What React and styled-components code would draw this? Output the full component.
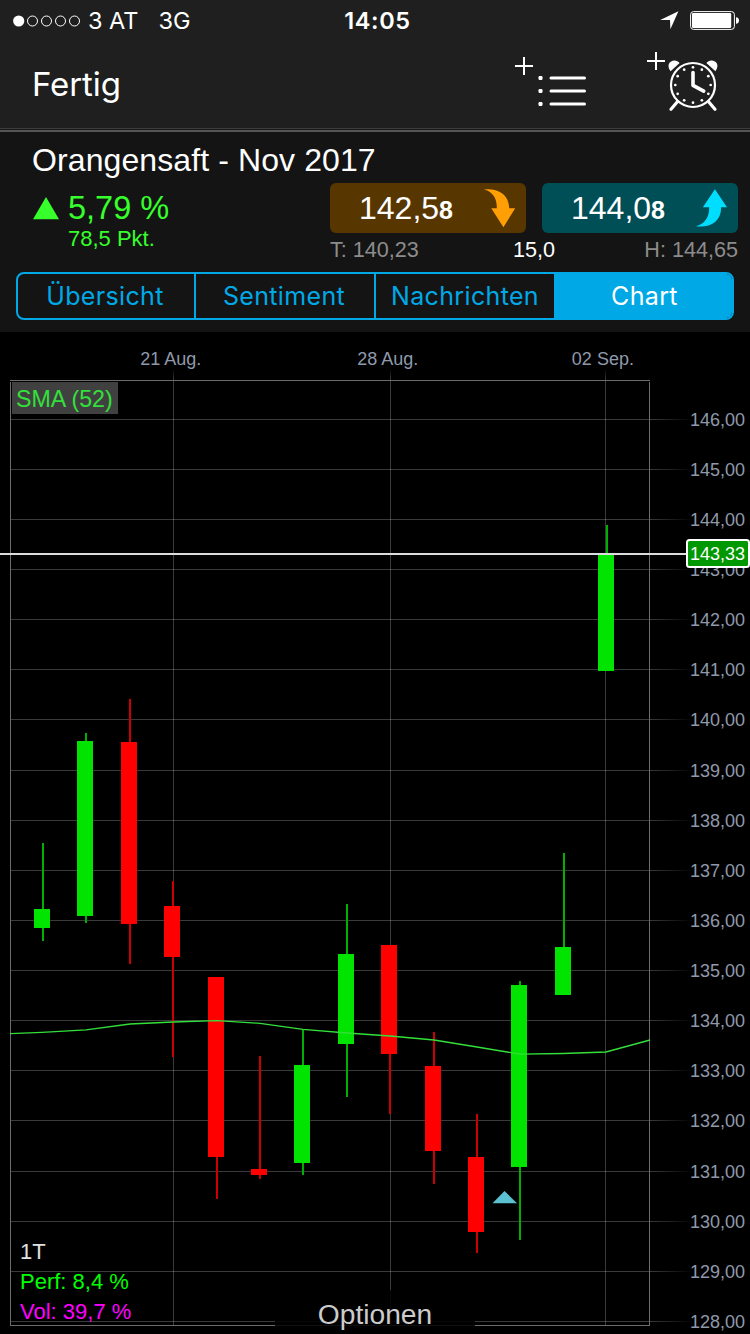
import React from 'react';
import styled, { createGlobalStyle } from 'styled-components';

const tabs = [
    { id: 'overview', label: 'Übersicht' },
    { id: 'sentiment', label: 'Sentiment' },
    { id: 'news', label: 'Nachrichten' },
    { id: 'chart', label: 'Chart' },
];

// vertical positions are in chart pixels, the chart starts right below the quote panel
const TOP = 332;

const priceLines = [
    [146, 419], [145, 469], [144, 519], [143, 569], [142, 619], [141, 669], [140, 719],
    [139, 770], [138, 820], [137, 870], [136, 920], [135, 970], [134, 1020], [133, 1070],
    [132, 1120], [131, 1171], [130, 1221], [129, 1271], [128, 1321],
];

const dateLines = [
    { label: '21 Aug.', x: 173, center: 170.7 },
    { label: '28 Aug.', x: 390, center: 387.7 },
    { label: '02 Sep.', x: 605, center: 602.9 },
];

const candles = [
    { x: 34, open: 909, close: 928, high: 843, low: 941, up: true },
    { x: 77, open: 741, close: 916, high: 733, low: 923, up: true },
    { x: 121, open: 742, close: 924, high: 699, low: 964 },
    { x: 164, open: 906, close: 957, high: 881, low: 1057 },
    { x: 208, open: 977, close: 1157, high: 977, low: 1199 },
    { x: 251, open: 1169, close: 1175, high: 1056, low: 1179 },
    { x: 294, open: 1065, close: 1163, high: 1030, low: 1175, up: true },
    { x: 338, open: 954, close: 1044, high: 904, low: 1097, up: true },
    { x: 381, open: 945, close: 1054, high: 945, low: 1114 },
    { x: 425, open: 1066, close: 1151, high: 1032, low: 1184 },
    { x: 468, open: 1157, close: 1232, high: 1114, low: 1253 },
    { x: 511, open: 985, close: 1167, high: 981, low: 1240, up: true },
    { x: 555, open: 947, close: 995, high: 853, low: 995, up: true },
    { x: 598, open: 554, close: 671, high: 525, low: 671, up: true },
];

const sma = '10,1033.7 42,1032.3 86,1029.8 130,1024 173,1022 217,1020.7 260,1023.3 303,1029.4 347,1033 390,1036 434,1040 477,1047 520,1054.2 563,1053.5 606,1052 650,1040';

const SignalDots = () => (
    <svg width="68" height="12" viewBox="0 0 68 12">
        <circle cx="5.7" cy="6" r="5.6" fill="#fff" />
        {[19.5, 33.5, 47.5, 61.5].map((cx) => (
            <circle key={cx} cx={cx} cy="6" r="5" fill="none" stroke="#fff" strokeWidth="1" />
        ))}
    </svg>
);

const LocationIcon = () => (
    <svg width="19" height="19" viewBox="0 0 19 19">
        <path d="M18.4 .2L10.4 18.2L10 9H.2Z" fill="#fff" />
    </svg>
);

const BatteryIcon = () => (
    <svg width="49" height="20" viewBox="0 0 49 20">
        <rect x=".6" y=".6" width="43.8" height="17.8" rx="3" fill="none" stroke="#fff" strokeWidth="1" />
        <rect x="2" y="2" width="39.2" height="15" rx="1.2" fill="#fff" />
        <path d="M46 6.2C48 6.2 49 7.6 49 9.5S48 12.8 46 12.8Z" fill="#fff" />
    </svg>
);

const AddListIcon = () => (
    <svg width="72" height="52" viewBox="0 0 72 52">
        <path d="M0 9H18M9 0V18" stroke="#fff" strokeWidth="2" />
        {[21, 34, 47].map((y) => (
            <g key={y}>
                <rect x="23.5" y={y - 2} width="4" height="4" rx="1.2" fill="#fff" />
                <path d={`M36 ${y}H69.5`} stroke="#fff" strokeWidth="3" strokeLinecap="round" />
            </g>
        ))}
    </svg>
);

const AddAlarmIcon = () => (
    <svg width="72" height="60" viewBox="0 0 72 60">
        <path d="M0 9H18M9 0V18" stroke="#fff" strokeWidth="2" />
        <path d="M23.6 19.3C20.8 15.4 21 11.8 23.7 9.8C26.6 7.6 30.5 8.1 32.6 11Z" fill="#fff" />
        <path d="M68.4 19.3C71.2 15.4 71 11.8 68.3 9.8C65.4 7.6 61.5 8.1 59.4 11Z" fill="#fff" />
        <circle cx="46" cy="33" r="22" fill="none" stroke="#fff" strokeWidth="2.2" />
        <path d="M30.2 50L24 57.2M61.8 50L68 57.2" stroke="#fff" strokeWidth="3.2" strokeLinecap="round" />
        <path d="M46 20.5V33.3L56.7 39.2" fill="none" stroke="#fff" strokeWidth="3.6" strokeLinecap="round" strokeLinejoin="round" />
        {Array.from({ length: 12 }, (_, i) => (
            <circle
                key={i}
                cx={46 + 17.7 * Math.sin((i * Math.PI) / 6)}
                cy={33 - 17.7 * Math.cos((i * Math.PI) / 6)}
                r="1.35"
                fill="#fff"
            />
        ))}
    </svg>
);

const SellArrow = () => (
    <svg width="32" height="39" viewBox="0 0 32 39">
        <path d="M0 .3C14-.6 25 5 25.2 19.3H31.2L19.4 38.2L7.3 19.3H12.8C13 10 9.5 3.2 0 .3Z" fill="#ff9f05" />
    </svg>
);

const BuyArrow = () => (
    <svg width="32" height="39" viewBox="0 0 32 39">
        <path d="M0 37.3C14 38.8 25 33 25.2 18.2H31L18.9 .2L6.9 18.2H13.2C13.4 27 9.7 34.6 0 37.3Z" fill="#00deff" />
    </svg>
);

const CandleChart = () => (
    <ChartSvg width="750" height="1002" viewBox={`0 ${TOP} 750 1002`}>
        <defs>
            <linearGradient id="tailRight" x1="650" x2="694" y1="0" y2="0" gradientUnits="userSpaceOnUse">
                <stop offset="0" stopColor="#3a3a3a" />
                <stop offset="1" stopColor="#3a3a3a" stopOpacity="0" />
            </linearGradient>
            <linearGradient id="tailTop" x1="0" x2="0" y1="380" y2="368" gradientUnits="userSpaceOnUse">
                <stop offset="0" stopColor="#3a3a3a" />
                <stop offset="1" stopColor="#3a3a3a" stopOpacity="0" />
            </linearGradient>
        </defs>
        <g shapeRendering="crispEdges">
            {priceLines.map(([price, y]) => (
                <g key={price}>
                    <rect x="10" y={y} width="640" height="1" fill="#3a3a3a" />
                    <rect x="650" y={y} width="44" height="1" fill="url(#tailRight)" />
                </g>
            ))}
            {dateLines.map(({ label, x }) => (
                <g key={label}>
                    <rect x={x} y="368" width="1" height="12" fill="url(#tailTop)" />
                    <rect x={x} y="380" width="1" height="945" fill="#fff" fillOpacity=".23" />
                </g>
            ))}
            <path d="M10 380.5H650M10.5 382V1326M649.5 382V1326M10 1325.5H650" stroke="#6c6c6c" />
            {candles.map(({ x, open, close, high, low, up }) => (
                <g key={x}>
                    <rect x={x + 8} y={high} width="2" height={low - high} fill={up ? '#00b000' : '#cc0000'} />
                    <rect x={x} y={open} width="16" height={close - open} fill={up ? '#00e400' : '#ff0000'} />
                </g>
            ))}
        </g>
        <polyline points={sma} fill="none" stroke="#33e03a" strokeWidth="1.3" />
        <path d="M504.5 1191L517 1203.2H492.5Z" fill="#5bc0d0" />
        <AxisLabels>
            {dateLines.map(({ label, center }) => (
                <text key={label} x={center} y="365" textAnchor="middle">{label}</text>
            ))}
            {priceLines.map(([price, y]) => (
                <text key={price} x="745" y={y + 7} textAnchor="end">{price},00</text>
            ))}
        </AxisLabels>
        <rect x="0" y="553" width="687" height="2" fill="#dcdcdc" />
        <rect x="687" y="540" width="62" height="27" rx="2.5" fill="#009800" stroke="#fff" strokeWidth="2" />
        <LastPrice x="745" y="560" textAnchor="end">143,33</LastPrice>
    </ChartSvg>
);

export default function App() {
    return (
        <>
            <GlobalStyle />
            <Screen>
                <StatusBar>
                    <Carrier>
                        <SignalDots />
                        <span>3 AT</span>
                        <span>3G</span>
                    </Carrier>
                    <Clock>14:05</Clock>
                    <StatusIcons>
                        <LocationIcon />
                        <BatteryIcon />
                    </StatusIcons>
                </StatusBar>
                <NavBar>
                    <DoneBtn>Fertig</DoneBtn>
                    <NavActions>
                        <IconBtn $drop={16}><AddListIcon /></IconBtn>
                        <IconBtn $drop={11}><AddAlarmIcon /></IconBtn>
                    </NavActions>
                </NavBar>
                <QuotePanel>
                    <QuoteTitle>Orangensaft - Nov 2017</QuoteTitle>
                    <QuoteRow>
                        <Change>
                            <Percent>
                                <svg width="26" height="23" viewBox="0 0 26 23"><path d="M13 0L26 22.2H0Z" fill="#36ff2b" /></svg>
                                5,79 %
                            </Percent>
                            <Points>78,5 Pkt.</Points>
                        </Change>
                        <Prices>
                            <PriceBtn $bg="#583600">
                                <Price>142,5<b>8</b></Price>
                                <SellArrow />
                            </PriceBtn>
                            <PriceBtn $bg="#004f57">
                                <Price>144,0<b>8</b></Price>
                                <BuyArrow />
                            </PriceBtn>
                            <Range>
                                <span>T: 140,23</span>
                                <Spread>15,0</Spread>
                                <span>H: 144,65</span>
                            </Range>
                        </Prices>
                    </QuoteRow>
                    <Tabs>
                        {tabs.map(({ id, label }) => (
                            <Tab key={id} $active={id === 'chart'}>{label}</Tab>
                        ))}
                    </Tabs>
                </QuotePanel>
                <ChartArea>
                    <CandleChart />
                    <Indicator>SMA (52)</Indicator>
                    <Stats>
                        <Stat $color="#e0e0e0">1T</Stat>
                        <Stat $color="#00ff00">Perf: 8,4 %</Stat>
                        <Stat $color="#ff00ff">Vol: 39,7 %</Stat>
                    </Stats>
                    <OptionsBtn>Optionen</OptionsBtn>
                </ChartArea>
            </Screen>
        </>
    );
}

const GlobalStyle = createGlobalStyle`
    body {
        margin: 0;
        background-color: #000;
    }
    svg {
        display: block;
        flex: none;
    }
`;

const Screen = styled.div`
    width: 750px;
    height: 1334px;
    overflow: hidden;
    display: flex;
    flex-direction: column;
    color: #fff;
    font-family: "Liberation Sans", Arial, sans-serif;
    white-space: nowrap;
`;

const StatusBar = styled.div`
    height: 41px;
    display: grid;
    grid-template-columns: 1fr auto 1fr;
    align-items: center;
    padding: 0 11px 0 13px;
    background-color: #1f1f1f;
    font-family: Inter, sans-serif;
    font-size: 23.5px;
`;

const Carrier = styled.div`
    display: flex;
    align-items: center;

    span {
        margin-left: 7px;
    }
    span + span {
        margin-left: 20px;
    }
`;

const Clock = styled.span`
    padding-left: 3px;
    font-weight: 600;
    letter-spacing: .6px;
`;

const StatusIcons = styled.div`
    display: flex;
    justify-content: flex-end;
    align-items: center;
    gap: 11px;
`;

const NavBar = styled.header`
    height: 87px;
    display: flex;
    justify-content: space-between;
    align-items: flex-start;
    padding: 0 31px 0 32px;
    background-color: #1f1f1f;
    border-bottom: 1px solid #3c3c3c;
`;

const DoneBtn = styled.button`
    all: unset;
    line-height: 87px;
    font-family: Inter, sans-serif;
    font-size: 33px;
    letter-spacing: -.1px;
    cursor: pointer;
`;

const NavActions = styled.div`
    display: flex;
    align-items: flex-start;
    gap: 60px;
`;

const IconBtn = styled.button`
    all: unset;
    padding-top: ${({ $drop }) => $drop}px;
    cursor: pointer;
`;

const QuotePanel = styled.section`
    height: 203px;
    box-sizing: border-box;
    padding-top: 1px;
    background-color: #141414;
    background-image: linear-gradient(#1a1a1a 1px, #555 1px, #555 3px, transparent 3px);
`;

const QuoteTitle = styled.h1`
    margin: 0;
    padding: 12px 0 0 32px;
    height: 41px;
    line-height: 36px;
    font-size: 32px;
    font-weight: 400;
    letter-spacing: .1px;
`;

const QuoteRow = styled.div`
    display: flex;
    justify-content: space-between;
    height: 89px;
    padding: 0 12px 0 33px;
`;

const Change = styled.div`
    color: #36ff2b;
`;

const Percent = styled.div`
    display: flex;
    align-items: center;
    gap: 9px;
    height: 36px;
    padding-top: 7px;
    font-size: 32.5px;
`;

const Points = styled.div`
    padding-left: 35px;
    line-height: 25px;
    font-size: 22px;
`;

const Prices = styled.div`
    display: grid;
    grid-template-columns: 196px 196px;
    grid-template-rows: 50px 30px;
    column-gap: 16px;
`;

const PriceBtn = styled.button`
    all: unset;
    box-sizing: border-box;
    display: flex;
    justify-content: space-between;
    align-items: center;
    padding: 0 10px 0 29px;
    border-radius: 6px;
    background-color: ${({ $bg }) => $bg};
    cursor: pointer;
`;

const Price = styled.span`
    font-size: 32px;

    b {
        font-size: 25px;
    }
`;

const Range = styled.div`
    grid-column: 1 / 3;
    display: grid;
    grid-template-columns: 1fr auto 1fr;
    line-height: 33px;
    font-size: 21.6px;
    color: #8c8c8c;

    span:last-child {
        text-align: right;
    }
`;

const Spread = styled.span`
    color: #fff;
`;

const Tabs = styled.nav`
    display: grid;
    grid-template-columns: 178px 180px 178px 178px;
    height: 44px;
    margin: 0 16px;
    border: 2px solid #00a9e6;
    border-radius: 8px;
    overflow: hidden;
`;

const Tab = styled.button`
    all: unset;
    box-sizing: border-box;
    text-align: center;
    line-height: 44px;
    font-family: Inter, sans-serif;
    font-size: 25px;
    letter-spacing: .35px;
    color: ${({ $active }) => ($active ? '#fff' : '#00a9e6')};
    background-color: ${({ $active }) => ($active ? '#00a9e6' : 'transparent')};
    cursor: pointer;

    &:nth-child(-n + 2) {
        padding-right: 2px;
        border-right: 2px solid #00a9e6;
    }
    &:last-child {
        padding-left: 3px;
    }
`;

const ChartArea = styled.main`
    position: relative;
    height: 1002px;
    background-color: #000;
`;

const ChartSvg = styled.svg`
    font-family: "Liberation Sans", Arial, sans-serif;
    font-size: 18px;
`;

const AxisLabels = styled.g`
    fill: #8f99ab;
`;

const LastPrice = styled.text`
    fill: #fff;
`;

const Indicator = styled.div`
    position: absolute;
    top: 50px;
    left: 12px;
    width: 102px;
    height: 32px;
    padding-left: 4px;
    line-height: 34px;
    font-size: 23.2px;
    color: #33e03a;
    background-color: #404040;
`;

const Stats = styled.div`
    position: absolute;
    left: 20px;
    bottom: 7px;
`;

const Stat = styled.div`
    line-height: 30px;
    font-size: 22px;
    color: ${({ $color }) => $color};
`;

const OptionsBtn = styled.button`
    all: unset;
    position: absolute;
    left: 275px;
    bottom: 0;
    width: 200px;
    height: 44px;
    line-height: 48px;
    text-align: center;
    font-size: 28.2px;
    color: #ccc;
    background-color: rgba(0, 0, 0, .85);
    cursor: pointer;
`;
